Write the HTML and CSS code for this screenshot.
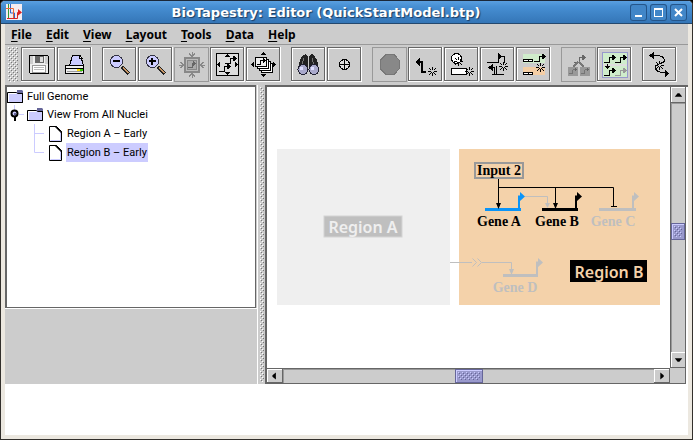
FILE: index.html
```html
<!DOCTYPE html>
<html lang="en">
<head>
<meta charset="utf-8">
<title>BioTapestry: Editor (QuickStartModel.btp)</title>
<link rel="stylesheet" href="styles.css">
</head>
<body>
<svg class="defs" aria-hidden="true">
  <defs>
    <pattern id="bumps" width="4" height="4" patternUnits="userSpaceOnUse">
      <path fill="#fff" d="M0 0h1v1H0zM2 2h1v1H2z"/><path fill="#777" d="M1 1h1v1H1zM3 3h1v1H3z"/>
    </pattern>
    <pattern id="thumb-bumps" width="4" height="4" patternUnits="userSpaceOnUse">
      <path fill="#ccf" d="M0 0h1v1H0zM2 2h1v1H2z"/><path fill="#669" d="M1 1h1v1H1zM3 3h1v1H3z"/>
    </pattern>
    <symbol id="burst" viewBox="0 0 9 9">
      <path fill="none" stroke="#000" d="M4.500 0v3M4.500 6v3M0 4.500h3M6 4.500h3M1 1l2.500 2.500M5.500 5.500L8 8M8 1L5.500 3.500M3.500 5.500L1 8"/>
    </symbol>
    <symbol id="promoter" viewBox="0 0 14 9">
      <path fill="none" stroke="currentColor" d="M0 7.500h5.500v-5H11"/><path fill="currentColor" d="M8 0h1l3 2.500L9 5H8z"/>
    </symbol>
    <symbol id="folder" viewBox="0 0 16 13">
      <path fill="#ccf" stroke="#000" d="M.5 2.500h9l1 1h5v9H.5z"/><path fill="#669" d="M10 0h5l1 1v2h-6z"/><path fill="none" stroke="#fff" d="M1.500 12V3.500H9"/><path fill="none" stroke="#000" d="M15.500 3v9.500H0"/>
    </symbol>
    <symbol id="sheet" viewBox="0 0 13 16">
      <path fill="#fff" stroke="#000" d="M.5.5h7l5 5v10H.5z"/><path fill="none" stroke="#ccf" d="M1.500 14.500h10V6"/><path fill="#ccf" stroke="#000" d="M7.500.5v1l4 4h1z"/><path stroke="#000" d="M6 .5l6.500 6.500"/>
    </symbol>
  </defs>
</svg>

<div class="window">
  <header class="titlebar">
    <svg class="app-icon" viewBox="0 0 16 16" aria-hidden="true">
      <path fill="#f4ecf1" d="M0 0h16v16H0z"/>
      <g fill="none" stroke-width="1"><path stroke="#393" d="M2.500 0v14"/><path stroke="#36c" d="M4.500 0v9h4v5"/><path stroke="#e63" d="M0 4.500h7.500V14"/><path stroke="#d22" d="M1 14.500h10.500v-6H14"/></g>
      <path fill="#d22" d="M12 5l4 3.500-4 3z"/>
    </svg>
    <h1 class="title">BioTapestry: Editor (QuickStartModel.btp)</h1>
    <div class="window-controls">
      <button aria-label="Minimize"><svg viewBox="0 0 17 17"><path fill="#fff" d="M5 11h7v2H5z"/></svg></button>
      <button aria-label="Maximize"><svg viewBox="0 0 17 17"><path fill="#fff" fill-rule="evenodd" d="M4 4h9v9H4zM5 6v6h7V6z"/></svg></button>
      <button aria-label="Close"><svg viewBox="0 0 17 17"><path stroke="#fff" stroke-width="2" d="M5 5l7 7M12 5l-7 7"/></svg></button>
    </div>
  </header>

  <div class="frame">
    <nav class="menubar" aria-label="Main menu">
      <button><u>F</u>ile</button>
      <button><u>E</u>dit</button>
      <button><u>V</u>iew</button>
      <button><u>L</u>ayout</button>
      <button><u>T</u>ools</button>
      <button><u>D</u>ata</button>
      <button><u>H</u>elp</button>
    </nav>

    <div class="toolbar" role="toolbar" aria-label="Tools">
      <svg class="grip" aria-hidden="true"><rect width="100%" height="100%" fill="url(#bumps)"/></svg>
      <div class="group">
        <button aria-label="Save"><svg viewBox="0 0 35 35">
          <path fill="#eee" stroke="#000" d="M8.500 8.500h18l1 1v17h-18l-1-1z"/><path fill="#666" d="M14 9h9v7h-9z"/><path fill="#ddd" d="M19 10h3v5h-3z"/><path fill="#ccc" d="M9 9h3v8H9zM24 9h3v8h-3z"/>
          <path fill="#fff" stroke="#999" d="M11.500 18.500h13v7h-13z"/><path stroke="#bbb" d="M13 20.500h10M13 22.500h10"/></svg></button>
        <button aria-label="Print"><svg viewBox="0 0 35 35">
          <path fill="#ccf" stroke="#000" d="M12.500 18.500L15.500 8.500h8l3 10z"/><path fill="#fff" stroke="#000" d="M22.500 8.500l3 3h-3z"/>
          <path fill="#eee" stroke="#000" d="M8.500 18.500h18v3h-18zM8.500 21.500h18v5h-18z"/><path fill="#fd0" d="M20 22h3v2h-3z"/><path fill="#3c0" d="M23 22h3v2h-3z"/><path stroke="#999" d="M10 24.500h15"/></svg></button>
      </div>
      <div class="group">
        <button aria-label="Zoom out"><svg viewBox="0 0 35 35">
          <path stroke="#222" stroke-width="4" d="M20 20l7 7"/><path stroke="#c96" stroke-width="2" d="M21 20.500l5.500 5.500"/><circle cx="14.500" cy="14.500" r="6" fill="#ccf" stroke="#334" /><path stroke="#000" stroke-width="2" d="M11 14h7"/></svg></button>
        <button aria-label="Zoom in"><svg viewBox="0 0 35 35">
          <path stroke="#222" stroke-width="4" d="M20 20l7 7"/><path stroke="#c96" stroke-width="2" d="M21 20.500l5.500 5.500"/><circle cx="14.500" cy="14.500" r="6" fill="#ccf" stroke="#334"/><path stroke="#000" stroke-width="2" d="M11 14h7M14 11v7"/></svg></button>
        <button aria-label="Zoom to selection" disabled><svg viewBox="0 0 35 35">
          <path fill="#bbb" stroke="#888" stroke-width="2" d="M11 11h14v14H11z"/><path fill="#aaa" stroke="#888" d="M13.500 13.500h9v9h-9z"/><path fill="none" stroke="#666" d="M14 20.500h4.500v-4H21M19 14.500l2 2-2 2"/>
          <path fill="none" stroke="#888" stroke-width="1" d="M15 6.500l3 3 3-3M15 29.500l3-3 3 3M6.500 15l3 3-3 3M29.500 15l-3 3 3 3M18 5v4M18 27v4M5 18h4M27 18h4"/></svg></button>
        <button aria-label="Zoom to all"><svg viewBox="0 0 35 35">
          <path fill="#ddd" stroke="#000" d="M6.500 6.500h22v22h-22z"/>
          <path d="M17.500 7l3 3h-6zM17.500 28l3-3h-6zM7 17.500l3-3v6zM28 17.500l-3-3v6z"/>
          <use href="#promoter" x="15" y="9" width="14" height="9"/><use href="#promoter" x="9" y="17" width="14" height="9"/></svg></button>
        <button aria-label="Zoom to all models"><svg viewBox="0 0 35 35">
          <path fill="#fff" stroke="#000" d="M15.500 16.500h11v9h-11z"/><path fill="#fff" stroke="#000" d="M13.500 14.500h11v9h-11z"/><path fill="#fff" stroke="#000" d="M11.500 12.500h11v9h-11z"/><path fill="#eee" stroke="#000" d="M9.500 10.500h11v9h-11z"/>
          <path fill="none" stroke="#000" d="M11 17.500h3.500v-4H19M17 11.500l2 2-2 2"/>
          <path d="M17.500 5l3 3h-6zM17.500 30l3-3h-6zM5 17.500l3-3v6zM30 17.500l-3-3v6z"/></svg></button>
      </div>
      <div class="group">
        <button aria-label="Find"><svg viewBox="0 0 35 35">
          <path fill="#222" d="M12 8l3-1 2 3v10l-2 4-8-2 2-9zM23 8l-3-1-2 3v10l2 4 8-2-2-9z"/><path stroke="#777" d="M12.500 11l-1.500 8M21.500 11l1 8"/>
          <circle cx="12" cy="22.500" r="5" fill="#aac" stroke="#223"/><circle cx="23" cy="22.500" r="5" fill="#aac" stroke="#223"/><path fill="#ddf" d="M9 20h3v3H9zM20 20h3v3h-3z"/></svg></button>
        <button aria-label="Center"><svg viewBox="0 0 35 35"><circle cx="17.500" cy="17.500" r="5" fill="#ddd" stroke="#000"/><path stroke="#000" d="M12 17.500h11M17.500 12v11"/></svg></button>
      </div>
      <div class="group">
        <button aria-label="Cancel" disabled><svg viewBox="0 0 35 35"><path fill="#888" stroke="#777" d="M14 7.500h8l5.500 6v8l-5.500 6h-8l-6-6v-8z"/></svg></button>
        <button aria-label="Add gene"><svg viewBox="0 0 35 35"><path fill="none" stroke="#000" stroke-width="2" d="M18 25h-4v-10h-4"/><path d="M7 15l5-4v8z"/><use href="#burst" x="20" y="20" width="9" height="9"/></svg></button>
        <button aria-label="Add node"><svg viewBox="0 0 35 35"><circle cx="12.500" cy="11.500" r="5" fill="#fff" stroke="#000"/><path fill="#fff" stroke="#000" d="M7.500 21.500h15v6h-15z"/><use href="#burst" x="10" y="10" width="9" height="9"/><use href="#burst" x="21" y="20" width="9" height="9"/></svg></button>
        <button aria-label="Add link"><svg viewBox="0 0 35 35"><path fill="none" stroke="#000" d="M7 15.500h11.500v-6h6v6M12 27.500h12M16.500 28V18.500M11 20.500h3.500v7"/><path d="M22 9.500l-4-4v8zM8 20.500l5-4v8z"/><use href="#burst" x="19" y="15" width="9" height="9"/></svg></button>
        <button aria-label="Add region"><svg viewBox="0 0 35 35"><path fill="#cfeccb" d="M7 7h22v9H7z"/><path fill="#f4cea5" d="M7 20h22v8H7z"/><path fill="#fff" stroke="#000" d="M7.500 12.500h9v2h-9zM7.500 25.500h9v2h-9zM12.500 12v3M12.500 25v3"/><use href="#promoter" x="18" y="7" width="14" height="9"/><use href="#burst" x="20" y="16" width="9" height="9"/></svg></button>
      </div>
      <div class="group">
        <button aria-label="Add submodel" disabled><svg viewBox="0 0 35 35"><path fill="#999" d="M7 20h10v9H7zM19 20h10v9H19z"/><g color="#666"><use href="#promoter" x="13" y="8" width="14" height="9"/><use href="#promoter" x="8" y="20" width="10" height="8"/><use href="#promoter" x="20" y="20" width="10" height="8"/></g><path stroke="#777" stroke-width="2" d="M17 15l-5 5M18 15l5 5"/></svg></button>
        <button aria-label="Draw region instance"><svg viewBox="0 0 35 35"><path fill="#cfeccb" stroke="#99c" d="M5.500 5.500h25v25h-25z"/><path stroke="#ddd" stroke-width="2" d="M6 18h24"/><use href="#promoter" x="7" y="8" width="14" height="9"/><use href="#promoter" x="18" y="8" width="14" height="9"/><use href="#promoter" x="7" y="21" width="14" height="9"/><g color="#999"><use href="#promoter" x="18" y="21" width="14" height="9"/></g><path d="M7 19h7l-3.500 3z"/><path stroke="#000" d="M10.500 17v5"/></svg></button>
      </div>
      <div class="group">
        <button aria-label="Relayout link"><svg viewBox="0 0 35 35"><path fill="none" stroke="#000" stroke-width="1" d="M10 8.500h5c4 0 7.500 2 7.500 5s-8 3-9 6c-1 4 4 6.500 10 6.500"/><path d="M7 8.500l5-4v8zM27 26.500l-4-4v8z"/><use href="#burst" x="13" y="14" width="9" height="9"/></svg></button>
      </div>
    </div>

    <div class="workspace">
      <aside class="sidebar">
        <ul class="tree" role="tree">
          <li role="treeitem"><div class="row root"><svg class="folder"><use href="#folder"/></svg><span class="label">Full Genome</span></div></li>
          <li role="treeitem" aria-expanded="true">
            <div class="row"><svg class="handle" viewBox="0 0 20 19" aria-hidden="true"><path stroke="#ccf" d="M7.500 0v6M12 9.500h5"/><circle cx="7.500" cy="8.500" r="3" fill="#ccf" stroke="#000" stroke-width="2"/><path fill="#669" d="M7 8h2v2H7z"/><path stroke="#000" stroke-width="2" d="M8 12v4"/></svg><svg class="folder"><use href="#folder"/></svg><span class="label">View From All Nuclei</span></div>
            <ul role="group">
              <li role="treeitem"><div class="row"><svg class="branch" viewBox="0 0 42 19" aria-hidden="true"><path fill="none" stroke="#ccf" d="M27.500 0v19M27.500 9.500H37"/></svg><svg class="sheet"><use href="#sheet"/></svg><span class="label">Region A – Early</span></div></li>
              <li role="treeitem" aria-selected="true"><div class="row"><svg class="branch" viewBox="0 0 42 19" aria-hidden="true"><path fill="none" stroke="#ccf" d="M27.500 0v9.500H37"/></svg><svg class="sheet"><use href="#sheet"/></svg><span class="label selected">Region B – Early</span></div></li>
            </ul>
          </li>
        </ul>
        <div class="overview"></div>
      </aside>

      <div class="splitter" role="separator"><svg aria-hidden="true"><rect width="100%" height="100%" fill="url(#bumps)"/></svg></div>

      <main class="viewer">
        <div class="canvas">
          <svg class="diagram" viewBox="267 87 403 280" role="img" aria-label="Regulatory network">
            <rect class="region-a" x="277" y="149" width="173" height="156"/>
            <rect class="region-b" x="459" y="149" width="201" height="156"/>

            <rect class="tag-a" x="324" y="216" width="78" height="21"/>
            <text class="tag-text faint" x="363" y="233">Region A</text>
            <rect class="tag-b" x="570" y="260" width="77" height="22"/>
            <text class="tag-text peach" x="609" y="278">Region B</text>

            <g class="idle">
              <path class="wire" d="M525 196.500h22.500v7M450 262.500h22M482 262.500h29.500v8M472.500 258.500l4 4-4 4M477.500 258.500l4 4-4 4"/>
              <path class="head" d="M545 203h5l-2.500 5zM509 269h5l-2.500 6zM634 192l5 4.500-5 4.500zM538 258l5 4.500-5 4.500z"/>
              <path class="bar" d="M599 209.500h37M503 275.500h35"/>
              <path class="stem" d="M633 209v-12.500h2M537 275v-12.500h2"/>
            </g>
            <g class="gene-a">
              <path class="bar" d="M485 209.500h36"/><path class="stem" d="M519 209v-12.500h3"/><path class="head" d="M520 192l5 4.500-5 4.500z"/>
            </g>
            <g class="gene-b">
              <path class="bar" d="M542 209.500h36"/><path class="stem" d="M576 209v-12.500h3"/><path class="head" d="M577 192l5 4.500-5 4.500z"/>
              <path class="wire" d="M498.500 178v26M498.500 187.500h115V206M555.500 187v17M611 206.500h6"/>
              <path class="head" d="M496 203h5l-2.500 6zM553 203h5l-2.500 6z"/>
            </g>
            <rect class="input-box" x="475" y="163" width="48" height="15"/>
            <text class="gene" x="499" y="175">Input 2</text>
            <text class="gene" x="499" y="226">Gene A</text>
            <text class="gene" x="557" y="226">Gene B</text>
            <text class="gene off" x="613" y="226">Gene C</text>
            <text class="gene off" x="515" y="292">Gene D</text>
          </svg>
        </div>
        <div class="scrollbar vertical">
          <button aria-label="Scroll up"><svg viewBox="0 0 14 14"><path d="M3 9h8L8 5H6z"/></svg></button>
          <div class="track"><div class="before"></div><div class="thumb"><svg aria-hidden="true"><rect width="100%" height="100%" fill="url(#thumb-bumps)"/></svg></div><div class="after"></div></div>
          <button aria-label="Scroll down"><svg viewBox="0 0 14 14"><path d="M3 5h8L8 9H6z"/></svg></button>
        </div>
        <div class="scrollbar horizontal">
          <button aria-label="Scroll left"><svg viewBox="0 0 14 14"><path d="M8 3v8L4 8V6z"/></svg></button>
          <div class="track"><div class="before"></div><div class="thumb"><svg aria-hidden="true"><rect width="100%" height="100%" fill="url(#thumb-bumps)"/></svg></div><div class="after"></div></div>
          <button aria-label="Scroll right"><svg viewBox="0 0 14 14"><path d="M5 3v8l4-3V6z"/></svg></button>
        </div>
        <div class="corner"></div>
      </main>
    </div>
    <footer class="messages"></footer>
  </div>
</div>
</body>
</html>
```
FILE: styles.css
```css
* { box-sizing: border-box; }

body {
  margin: 0;
  background: #000;
  font-family: "Noto Sans", "Open Sans", sans-serif;
  color: #000;
}

button {
  margin: 0;
  padding: 0;
  border: 0;
  background: none;
  font: inherit;
  color: inherit;
}

svg { display: block; }
ul { margin: 0; padding: 0; list-style: none; }
.defs { position: absolute; width: 0; height: 0; }

.window {
  display: flex;
  flex-direction: column;
  min-height: 100vh;
  background: #ece8e0;
  border: 1px solid #33302c;
  border-top-color: #1b2838;
  border-radius: 5px 5px 0 0;
  overflow: hidden;
}

.titlebar {
  display: flex;
  align-items: center;
  height: 23px;
  padding: 0 5px;
  background: linear-gradient(#5a9fe0, #478fd3 25%, #3476b7);
  border-bottom: 1px solid #24486e;
}
.app-icon { width: 16px; height: 16px; }
.title {
  flex: 1;
  margin: 0;
  padding-top: 2px;
  text-align: center;
  font: bold 13px/20px "DejaVu Sans", sans-serif;
  color: #fff;
  text-shadow: 1px 1px 1px #1c3c60;
  white-space: nowrap;
}
.window-controls { display: flex; gap: 3px; }
.window-controls button {
  width: 17px;
  height: 17px;
  border-radius: 3px;
  background: #4186c8;
  box-shadow: inset 0 0 0 1px #24558a;
}

.frame {
  display: flex;
  flex-direction: column;
  flex: 1;
  margin: 0 4px 4px;
  background: #ccc;
}

.menubar {
  display: flex;
  gap: 14px;
  height: 21px;
  padding: 1px 6px 0;
  border-bottom: 1px solid #999;
  font-size: 12px;
  font-weight: bold;
  line-height: 20px;
}
.menubar u { text-underline-offset: 2px; }

.toolbar {
  display: flex;
  gap: 10px;
  height: 40px;
  padding: 2px 3px;
}
.grip { width: 10px; height: 35px; margin-right: -7px; }
.group { display: flex; gap: 1px; }
.group button {
  width: 35px;
  height: 35px;
  box-shadow: inset -1px -1px #fff, inset 1px 1px #666, inset -2px -2px #666, inset 2px 2px #fff;
}
.group button:disabled { box-shadow: inset 0 0 0 1px #999; }
.group svg { width: 35px; height: 35px; shape-rendering: crispEdges; }

.workspace {
  display: grid;
  grid-template-columns: 252px 8px 1fr;
  flex: 1;
}

.sidebar { display: flex; flex-direction: column; }
.tree {
  flex: 1;
  background: #fff;
  border: solid #666;
  border-width: 2px 1px 1px 2px;
  margin-right: 1px;
  font: 11px/19px Roboto, "Noto Sans", sans-serif;
}
.row { display: flex; align-items: center; height: 19px; }
.root { height: 18px; }
.folder { width: 16px; height: 13px; margin-right: 3px; }
.sheet { width: 13px; height: 16px; margin-right: 4px; }
.handle { width: 20px; height: 19px; }
.branch { width: 42px; height: 19px; }
.label { padding: 0 1px; white-space: nowrap; }
.selected { background: #ccf; }
.overview { height: 76px; border-top: 1px solid #fff; }

.splitter { padding: 2px; border-left: 1px solid #fff; }
.splitter svg { width: 4px; height: 100%; }

.viewer {
  display: grid;
  grid-template: 1fr 16px / 1fr 16px;
  padding-right: 2px;
  background: #fff;
  border: solid #666;
  border-width: 2px 0 0 2px;
}
.canvas { background: #fff; overflow: hidden; }
.diagram { width: 403px; height: 280px; }

.region-a { fill: #efefef; }
.region-b { fill: #f4d2aa; }
.tag-a { fill: #bfbfbf; stroke: #d4d4d4; stroke-width: 1; }
.tag-b { fill: #000; }
.tag-text { font: 600 16px "Noto Sans", sans-serif; text-anchor: middle; }
.faint { fill: #efefef; }
.peach { fill: #f4d2aa; }
.gene { font: bold 14px "Liberation Serif", serif; text-anchor: middle; }
.off { fill: #bfbfbf; }
.input-box { fill: none; stroke: #999; stroke-width: 2; }
.idle { color: #bfbfbf; }
.gene-a { color: #0a94f8; }
.gene-b { color: #000; }
.wire { fill: none; stroke: currentColor; stroke-width: 1; }
.head { fill: currentColor; }
.bar { stroke: currentColor; stroke-width: 3; }
.stem { fill: none; stroke: currentColor; stroke-width: 2; }

.scrollbar { display: flex; background: #ccc; }
.scrollbar button {
  width: 16px;
  height: 16px;
  padding: 1px;
  box-shadow: inset -1px -1px #666, inset 1px 1px #fff;
}
.scrollbar button svg { width: 14px; height: 14px; }
.vertical { flex-direction: column; border-left: 1px solid #666; }
.vertical button { width: 15px; }
.vertical button svg { width: 13px; }
.horizontal { border: solid #666; border-width: 1px 0; }
.horizontal button { height: 14px; }
.horizontal button svg { height: 12px; }
.track { display: flex; flex: 1; box-shadow: inset 1px 1px #999; }
.vertical .track { flex-direction: column; border-right: 1px solid #666; }
.thumb { padding: 3px; background: #99c; box-shadow: inset 0 0 0 1px #669, inset 2px 2px #ccf; }
.thumb svg { width: 100%; height: 100%; }
.vertical .thumb { height: 17px; }
.horizontal .thumb { width: 28px; }
.before, .after { flex: 1; }
.vertical .before { flex: 15; }
.vertical .after { flex: 14; }
.corner { background: #ccc; border: solid #666; border-width: 0 1px 1px 0; }

.messages { height: 51px; background: #fff; }
```
